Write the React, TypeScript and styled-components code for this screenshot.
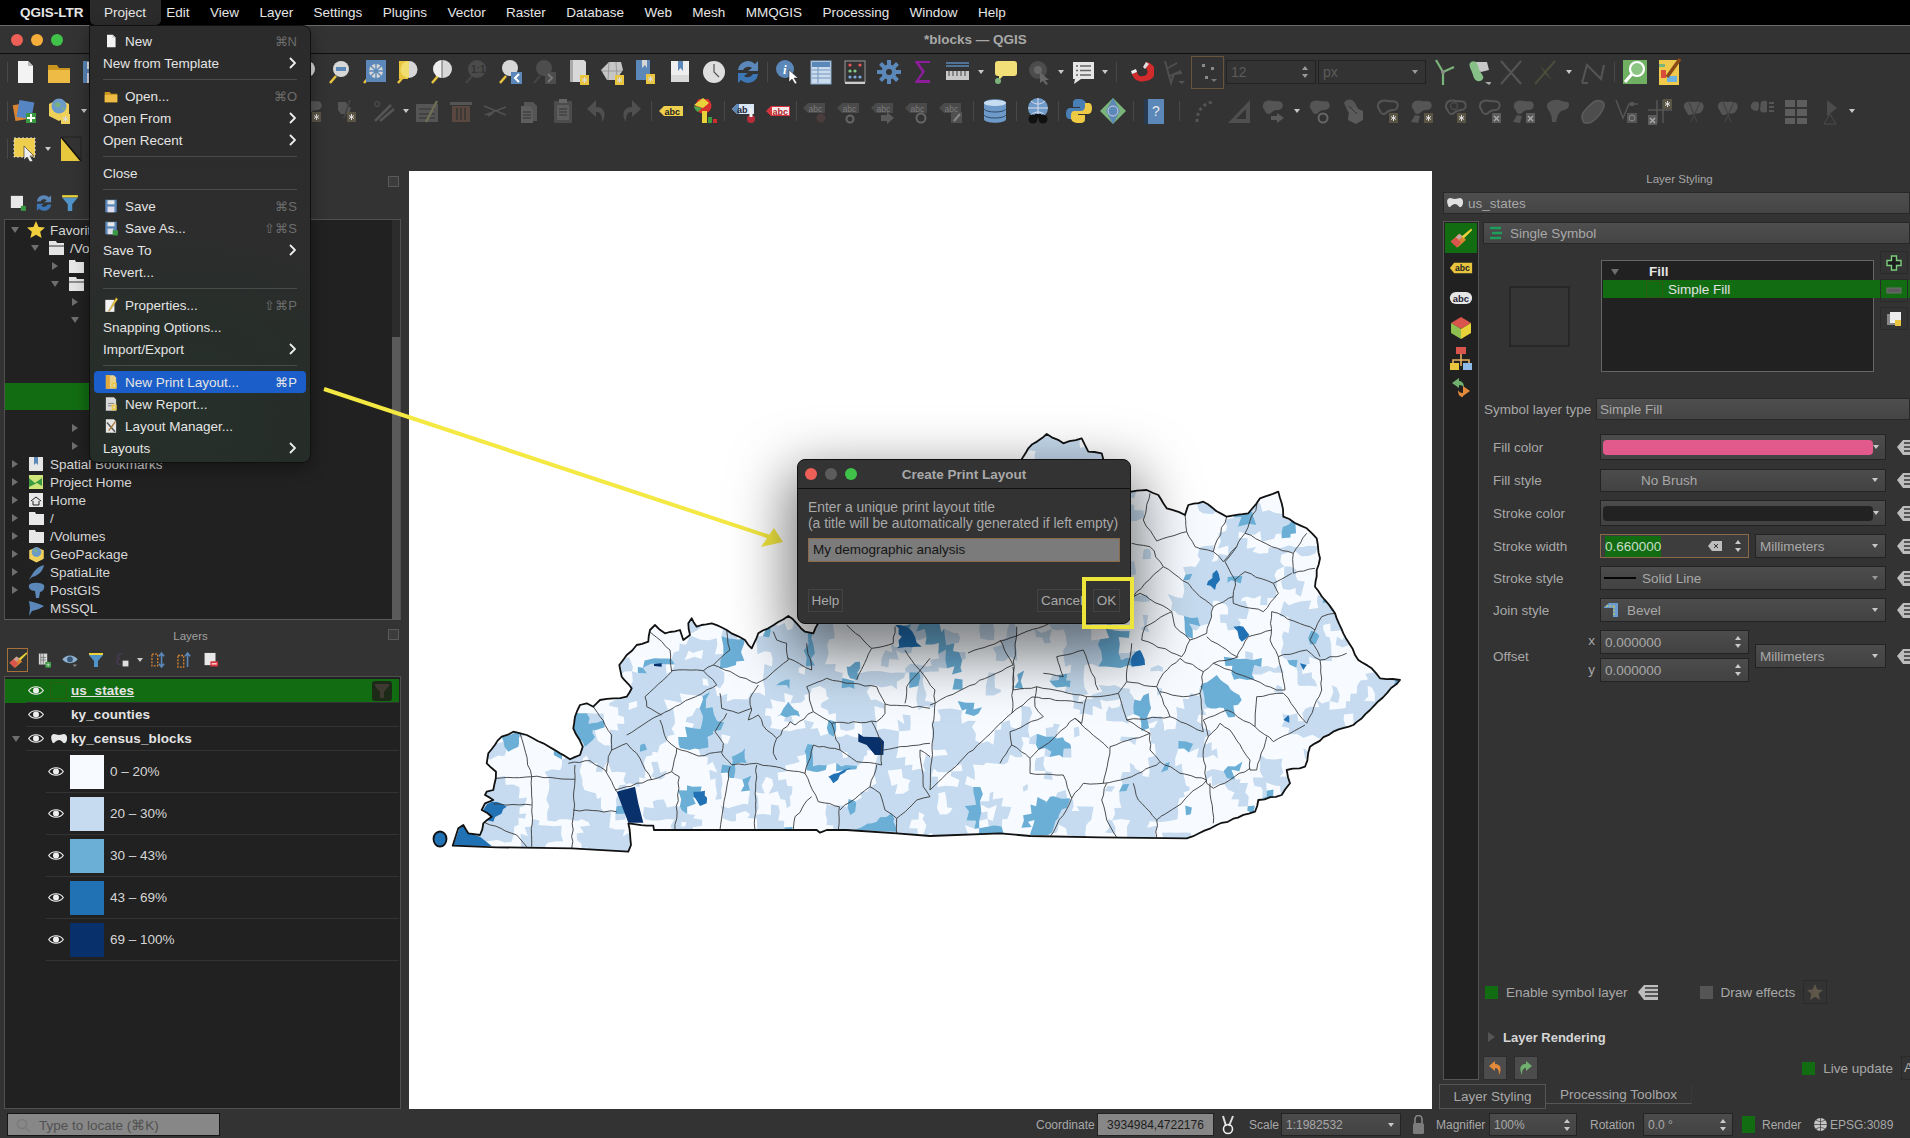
import React from "react";
import styled, { createGlobalStyle } from "styled-components";

const GlobalStyle = createGlobalStyle`
  html, body {
    margin: 0;
    background: #000;
    overflow: hidden;
    font-family: "Liberation Sans", Arial, sans-serif;
  }
  #root { width: 1910px; height: 1138px; }
`;

const Page = styled.div`
  position: relative;
  width: 1910px;
  height: 1138px;
  overflow: hidden;
  background: #333;
  display: flex;
  flex-direction: column;
`;

/* ---------- macOS menu bar ---------- */

const MenuBar = styled.div`
  height: 25px;
  flex: none;
  background: #000;
  border-bottom: 1px solid #6a6a6a;
  display: flex;
  align-items: center;
  gap: 20.4px;
  padding-left: 20px;
  color: #e6e6e6;
  font-size: 13.5px;
`;

const MenuTitle = styled.span<{ $bold?: boolean; $active?: boolean }>`
  position: relative;
  font-weight: ${(p) => (p.$bold ? 700 : 400)};
  &::before {
    content: "";
    display: ${(p) => (p.$active ? "block" : "none")};
    position: absolute;
    left: -14px;
    right: -15px;
    top: -6px;
    bottom: -5px;
    background: #2b2b2b;
    border-radius: 0 0 5px 5px;
    z-index: 0;
  }
  & > b {
    position: relative;
    font-weight: inherit;
  }
`;

const TitleBar = styled.div`
  height: 27px;
  flex: none;
  background: #333;
  border-bottom: 1px solid #0e0e0e;
  display: grid;
  grid-template-columns: 913px auto 1fr;
  align-items: center;
  padding-left: 11px;
`;

const Lights = styled.div`
  display: flex;
  gap: 8px;
`;

const Light = styled.span<{ $c: string }>`
  width: 12px;
  height: 12px;
  border-radius: 50%;
  background: ${(p) => p.$c};
`;

const WindowTitle = styled.div`
  color: #a8a8a8;
  font-size: 13.5px;
  font-weight: 700;
`;

/* ---------- toolbars ---------- */

const ToolRow = styled.div<{ $h: number; $pb?: number }>`
  height: ${(p) => p.$h}px;
  flex: none;
  box-sizing: border-box;
  display: flex;
  align-items: center;
  padding: 0 0 ${(p) => p.$pb || 0}px 6px;
  background: #333;
`;

const Slot = styled.div`
  width: 34px;
  height: 28px;
  flex: none;
  display: flex;
  align-items: center;
  justify-content: center;
`;

const Spacer = styled.div<{ $w: number }>`
  width: ${(p) => p.$w}px;
  flex: none;
  display: flex;
  justify-content: center;
  align-items: center;
`;

const SepLine = styled.span`
  width: 1px;
  height: 20px;
  background: #484848;
`;

const TinyDrop = styled.span<{ $c?: string }>`
  width: 0;
  height: 0;
  border-left: 3px solid transparent;
  border-right: 3px solid transparent;
  border-top: 4px solid ${(p) => p.$c || "#c8c8c8"};
`;

const TinyUp = styled(TinyDrop)`
  border-top: 0;
  border-bottom: 4px solid ${(p) => p.$c || "#c8c8c8"};
`;

const SnapBox = styled.div`
  width: 33px;
  height: 33px;
  flex: none;
  box-sizing: border-box;
  border: 1px solid #66553a;
  display: flex;
  align-items: center;
  justify-content: center;
`;

const DimInput = styled.div<{ $w: number }>`
  width: ${(p) => p.$w}px;
  height: 24px;
  flex: none;
  margin-left: 2px;
  box-sizing: border-box;
  border: 1px solid #222;
  color: #5c5c5c;
  font-size: 14px;
  display: flex;
  align-items: center;
  justify-content: space-between;
  padding: 0 7px 0 4px;
`;

const SpinPair = styled.span`
  display: flex;
  flex-direction: column;
  gap: 4px;
  align-items: center;
`;

/* ---------- workspace ---------- */

const Workspace = styled.div`
  height: 938px;
  flex: none;
  display: flex;
`;

const LeftDock = styled.div`
  width: 409px;
  flex: none;
  box-sizing: border-box;
  padding: 0 8px 0 4px;
  display: flex;
  flex-direction: column;
`;

const DockHeader = styled.div<{ $h: number }>`
  height: ${(p) => p.$h}px;
  flex: none;
  box-sizing: border-box;
  display: flex;
  align-items: center;
  position: relative;
  justify-content: center;
  padding: 4px 24px 0 0;
  color: #a0a0a0;
  font-size: 11.5px;
`;

const DockFloat = styled.span`
  position: absolute;
  right: 2px;
  top: 50%;
  margin-top: -5px;
  width: 9px;
  height: 9px;
  border: 1px solid #5a5a5a;
  background: #3c3c3c;
`;

const DockTools = styled.div<{ $h: number }>`
  height: ${(p) => p.$h}px;
  flex: none;
  box-sizing: border-box;
  display: flex;
  align-items: center;
  gap: 5px;
  padding: 0 0 4px 3px;
`;

const ToolBtn = styled.div<{ $on?: boolean }>`
  width: 21px;
  height: 24px;
  flex: none;
  box-sizing: border-box;
  display: flex;
  align-items: center;
  justify-content: center;
  border: 1px solid ${(p) => (p.$on ? "#a5703a" : "transparent")};
  & > svg { flex: none; }
`;

const BrowserWell = styled.div`
  height: 401px;
  flex: none;
  display: flex;
  background: #212121;
  border: 1px solid #505050;
  border-bottom-color: #5c5c5c;
  box-sizing: border-box;
`;

const TreeList = styled.div`
  flex: 1;
  min-width: 0;
  padding-top: 1px;
  display: flex;
  flex-direction: column;
`;

const ScrollTrack = styled.div`
  width: 8px;
  flex: none;
  display: flex;
  flex-direction: column;
  justify-content: flex-end;
  background: #2c2c2c;
`;

const ScrollThumb = styled.div`
  height: 282px;
  background: #5a5a5a;
`;

const TreeRow = styled.div<{ $indent: number }>`
  height: 18px;
  flex: none;
  display: flex;
  align-items: center;
  padding-left: ${(p) => p.$indent * 20}px;
  color: #d6d6d6;
  font-size: 13.5px;
  white-space: nowrap;
`;

const TreeGap = styled.div<{ $h: number; $green?: boolean }>`
  height: ${(p) => p.$h}px;
  flex: none;
  width: ${(p) => (p.$green ? "90px" : "auto")};
  background: ${(p) => (p.$green ? "#126d12" : "transparent")};
`;

const ArrowSlot = styled.span`
  width: 20px;
  flex: none;
  display: flex;
  justify-content: center;
`;

const TreeArrow = styled.span<{ $open?: boolean }>`
  width: 0;
  height: 0;
  ${(p) =>
    p.$open
      ? "border-left: 4px solid transparent; border-right: 4px solid transparent; border-top: 6px solid #6e6e6e;"
      : "border-top: 4px solid transparent; border-bottom: 4px solid transparent; border-left: 6px solid #6e6e6e;"}
`;

const TreeIcon = styled.span`
  width: 22px;
  flex: none;
  display: flex;
  justify-content: center;
  margin-right: 3px;
`;

const LayerWell = styled.div`
  flex: 1;
  min-height: 0;
  box-sizing: border-box;
  background: #212121;
  border: 1px solid #505050;
  padding-top: 2px;
`;

const LayerRow = styled.div<{ $active?: boolean }>`
  height: 24px;
  display: flex;
  align-items: center;
  background: ${(p) => (p.$active ? "#126d12" : "transparent")};
  padding-left: 1px;
  margin-right: 1px;
`;

const LayerBody = styled.div`
  flex: 1;
  align-self: stretch;
  display: flex;
  align-items: center;
  border-bottom: 1px solid #333;
  min-width: 0;
`;

const EyeSlot = styled.span`
  width: 20px;
  flex: none;
  display: flex;
  justify-content: center;
`;

const SymbolSlot = styled.span`
  width: 25px;
  flex: none;
  display: flex;
  justify-content: center;
`;

const LayerName = styled.span<{ $under?: boolean }>`
  color: #e4e4e4;
  font-weight: 700;
  font-size: 13.5px;
  letter-spacing: 0.1px;
  text-decoration: ${(p) => (p.$under ? "underline" : "none")};
`;

const SymbolDim = styled.span`
  width: 15px;
  height: 15px;
  border: 1px solid #2c5b12;
`;

const FilterChip = styled.span`
  margin-left: auto;
  margin-right: 7px;
  width: 20px;
  height: 20px;
  background: #1d2a18;
  border-radius: 3px;
  display: flex;
  align-items: center;
  justify-content: center;
`;

const LegendRow = styled.div`
  height: 42px;
  display: flex;
  padding-left: 41px;
  margin-right: 1px;
`;

const LegendBody = styled.div`
  flex: 1;
  display: flex;
  align-items: center;
  border-bottom: 1px solid #333;
  color: #d6d6d6;
  font-size: 13.5px;
`;

const Swatch = styled.span<{ $c: string }>`
  width: 34px;
  height: 34px;
  flex: none;
  background: ${(p) => p.$c};
  margin: 0 6px 0 4px;
`;

/* ---------- canvas ---------- */

const Canvas = styled.div`
  width: 1023px;
  flex: none;
  background: #fff;
  position: relative;
`;

const MapSvg = styled.svg`
  position: absolute;
  left: 0;
  top: 0;
`;

/* ---------- right dock ---------- */

const RightDock = styled.div`
  flex: 1;
  min-width: 0;
  box-sizing: border-box;
  padding-left: 11px;
  display: flex;
  flex-direction: column;
  overflow: hidden;
`;

const RightTitle = styled.div`
  height: 21px;
  flex: none;
  color: #a6a6a6;
  font-size: 11.5px;
  display: flex;
  align-items: center;
  justify-content: center;
  padding-left: 6px;
  padding-bottom: 5px;
  box-sizing: border-box;
`;

const Strip = styled.div<{ $h?: number }>`
  height: ${(p) => p.$h || 22}px;
  flex: none;
  box-sizing: border-box;
  border: 1px solid #282828;
  background: linear-gradient(#4e4e4e, #444);
  color: #a8a8a8;
  font-size: 13.5px;
  display: flex;
  align-items: center;
  gap: 5px;
  padding-left: 3px;
`;

const RightBody = styled.div`
  height: 859px;
  flex: none;
  margin-top: 7px;
  display: flex;
  gap: 4px;
`;

const TabColumn = styled.div`
  width: 36px;
  flex: none;
  box-sizing: border-box;
  background: #212121;
  border: 1px solid #555;
  padding: 1px;
  display: flex;
  flex-direction: column;
  align-items: stretch;
`;

const SideTab = styled.div<{ $on?: boolean }>`
  height: 30px;
  flex: none;
  display: flex;
  align-items: center;
  justify-content: center;
  background: ${(p) => (p.$on ? "#126d12" : "transparent")};
`;

const SymbolPage = styled.div`
  flex: 1;
  min-width: 0;
  padding-top: 1px;
  display: flex;
  flex-direction: column;
`;

const SymbolTop = styled.div`
  height: 154px;
  flex: none;
  display: flex;
  padding-top: 7px;
  box-sizing: border-box;
`;

const PreviewCell = styled.div`
  width: 118px;
  flex: none;
  padding-left: 26px;
  box-sizing: border-box;
  padding-top: 35px;
`;

const PreviewBox = styled.div`
  width: 61px;
  height: 61px;
  box-sizing: border-box;
  border: 2px solid #272727;
  background: #353535;
`;

const SymbolList = styled.div`
  width: 273px;
  height: 112px;
  flex: none;
  margin-top: 9px;
  box-sizing: border-box;
  background: #212121;
  border: 1px solid #666;
  padding: 1px;
`;

const ListRow = styled.div<{ $on?: boolean }>`
  width: 267px;
  height: 18px;
  display: flex;
  align-items: center;
  background: ${(p) => (p.$on ? "#126d12" : "transparent")};
  color: ${(p) => (p.$on ? "#e2e2e2" : "#e4e4e4")};
  font-size: 13.5px;
  font-weight: ${(p) => (p.$on ? 400 : 700)};
`;

const ListHead = styled(ListRow)`
  height: 17px;
  margin-top: 1px;
  padding-left: 8px;
  & > b { margin-left: 30px; }
`;

const ListItem = styled(ListRow)`
  padding-left: 43px;
  & > i {
    width: 15px;
    height: 15px;
    border: 1px solid #2c5b12;
    margin-right: 5px;
    flex: none;
  }
`;

const SideButtons = styled.div`
  margin-left: 6px;
  display: flex;
  flex-direction: column;
  gap: 5px;
`;

const SquareBtn = styled.div<{ $w?: number }>`
  width: ${(p) => p.$w || 28}px;
  height: 23px;
  box-sizing: border-box;
  border: 1px solid #2a2a2a;
  display: flex;
  align-items: center;
  justify-content: center;
  flex: none;
`;

const TypeRow = styled.div`
  height: 22px;
  flex: none;
  display: flex;
  align-items: center;
  color: #a8a8a8;
  font-size: 13.5px;
  & > span {
    width: 112px;
    flex: none;
    padding-left: 1px;
    white-space: nowrap;
  }
  & > div {
    flex: 1;
    min-width: 0;
  }
`;

const FieldStack = styled.div`
  margin-top: 14px;
  display: flex;
  flex-direction: column;
  gap: 8px;
`;

const FieldRow = styled.div<{ $h: number }>`
  height: ${(p) => p.$h}px;
  flex: none;
  display: flex;
  align-items: center;
  color: #a8a8a8;
  font-size: 13.5px;
`;

const FieldLabel = styled.div`
  width: 117px;
  flex: none;
  box-sizing: border-box;
  padding-left: 10px;
  display: flex;
  justify-content: space-between;
  align-items: center;
  align-self: stretch;
`;

const AxisLabels = styled.div`
  display: flex;
  flex-direction: column;
  justify-content: space-between;
  padding: 3px 5px 5px 0;
  align-self: stretch;
  box-sizing: border-box;
`;

const Combo = styled.div<{ $w?: number; $h?: number; $pad?: number }>`
  width: ${(p) => p.$w || 286}px;
  height: ${(p) => p.$h || 24}px;
  flex: none;
  box-sizing: border-box;
  border: 1px solid #232323;
  background: linear-gradient(#4c4c4c, #424242);
  display: flex;
  align-items: center;
  padding: 0 7px 0 ${(p) => (p.$pad === undefined ? 4 : p.$pad)}px;
  color: #a8a8a8;
  font-size: 13.5px;
  white-space: nowrap;
  & > :last-child { margin-left: auto; }
`;

const ColorFill = styled.span<{ $c: string }>`
  flex: none;
  width: 270px;
  height: 15px;
  margin-left: -2px;
  border-radius: 4px;
  background: ${(p) => p.$c};
`;

const LineSample = styled.span`
  width: 32px;
  height: 2px;
  background: #050505;
  margin-right: 6px;
  margin-left: -1px;
  flex: none;
`;

const NumberInput = styled(Combo)<{ $focus?: boolean }>`
  width: 149px;
  border-color: ${(p) => (p.$focus ? "#8a6a48" : "#232323")};
  background: ${(p) => (p.$focus ? "#3d3d3d" : "linear-gradient(#4c4c4c, #424242)")};
`;

const Selected = styled.span`
  background: #126d12;
  color: #c9dcc9;
  padding: 3px 0;
`;

const ClearMark = styled.svg`
  margin-left: 47px;
  flex: none;
`;

const OffsetStack = styled.div`
  display: flex;
  flex-direction: column;
  justify-content: space-between;
  align-self: stretch;
  width: 149px;
  flex: none;
`;

const Unit = styled.div`
  margin-left: 6px;
  flex: none;
`;

const DefinedSlot = styled.span`
  margin-left: 11px;
  flex: none;
  width: 20px;
  display: flex;
  align-items: center;
`;

const JoinMark = styled.svg`
  margin: 0 8px 0 -1px;
  flex: none;
`;

const EnableRow = styled.div`
  height: 24px;
  flex: none;
  margin-top: 298px;
  display: flex;
  align-items: center;
  color: #a8a8a8;
  font-size: 13.5px;
  padding-left: 2px;
`;

const Check = styled.span<{ $on?: boolean }>`
  width: 13px;
  height: 13px;
  flex: none;
  background: ${(p) => (p.$on ? "#126d12" : "#555")};
  margin-right: 8px;
`;

const InlineDefined = styled.span`
  margin: 0 42px 0 10px;
  display: flex;
`;

const RenderingRow = styled.div`
  height: 20px;
  flex: none;
  margin-top: 23px;
  display: flex;
  align-items: center;
  gap: 8px;
  padding-left: 5px;
  color: #d6d6d6;
  font-size: 13px;
  font-weight: 700;
`;

const HollowArrow = styled.span`
  width: 0;
  height: 0;
  border-top: 5px solid transparent;
  border-bottom: 5px solid transparent;
  border-left: 7px solid #555;
`;

const ActionRow = styled.div`
  height: 24px;
  flex: none;
  margin-top: 9px;
  display: flex;
  align-items: center;
  gap: 7px;
  color: #a8a8a8;
  font-size: 13.5px;
`;

const ActionBtn = styled(SquareBtn)`
  width: 24px;
  height: 24px;
  background: #4c4c4c;
  border-color: #2e2e2e;
`;

const StarBtn = styled(SquareBtn)`
  width: 24px;
  height: 24px;
  margin-left: 8px;
`;

const LiveGroup = styled.div`
  margin-left: auto;
  display: flex;
  align-items: center;
  white-space: nowrap;
  margin-right: -2px;
`;

const ApplyBtn = styled.span`
  margin-left: 8px;
  box-sizing: border-box;
  width: 11px;
  height: 24px;
  overflow: hidden;
  border: 1px solid #2a2a2a;
  border-right: 0;
  padding: 3px 2px;
`;

const TabBar = styled.div`
  margin-top: 4px;
  margin-left: -4px;
  height: 25px;
  flex: none;
  display: flex;
  align-items: flex-start;
  color: #a8a8a8;
  font-size: 13.5px;
`;

const DockTab = styled.div<{ $on?: boolean; $w: number }>`
  width: ${(p) => p.$w}px;
  height: ${(p) => (p.$on ? 25 : 20)}px;
  box-sizing: border-box;
  border: 1px solid #555;
  border-top-color: ${(p) => (p.$on ? "#555" : "transparent")};
  border-right-color: ${(p) => (p.$on ? "#555" : "#3a3a3a")};
  ${(p) => (p.$on ? "" : "border-left: 0;")}
  display: flex;
  align-items: center;
  justify-content: center;
`;

/* ---------- status bar ---------- */

const StatusBar = styled.div`
  height: 29px;
  flex: none;
  display: flex;
  align-items: center;
  padding-left: 7px;
  padding-top: 2px;
  box-sizing: border-box;
  color: #a8a8a8;
  font-size: 12px;
  white-space: nowrap;
`;

const Locator = styled.div`
  width: 213px;
  height: 23px;
  flex: none;
  box-sizing: border-box;
  border: 1px solid #151515;
  background: #878787;
  color: #515151;
  font-size: 13.5px;
  display: flex;
  align-items: center;
  gap: 9px;
  padding-left: 8px;
`;

const StatusLabel = styled.span<{ $w: number; $ml?: number }>`
  width: ${(p) => p.$w}px;
  margin-left: ${(p) => p.$ml || 0}px;
  flex: none;
`;

const CoordBox = styled.div`
  width: 117px;
  height: 23px;
  flex: none;
  box-sizing: border-box;
  border: 1px solid #222;
  background: #878787;
  color: #1e1e1e;
  display: flex;
  align-items: center;
  justify-content: center;
`;

const StatusCombo = styled.div<{ $w: number }>`
  width: ${(p) => p.$w}px;
  height: 23px;
  flex: none;
  box-sizing: border-box;
  border: 1px solid #232323;
  background: linear-gradient(#4c4c4c, #424242);
  display: flex;
  align-items: center;
  justify-content: space-between;
  padding: 0 6px 0 4px;
`;

const StatusIcon = styled.span<{ $w: number; $ml?: number }>`
  width: ${(p) => p.$w}px;
  margin-left: ${(p) => p.$ml || 0}px;
  flex: none;
  display: flex;
  justify-content: center;
`;

const StatusPush = styled.span<{ $w: number }>`
  width: ${(p) => p.$w}px;
  flex: none;
`;

const RenderCheck = styled.span`
  width: 13px;
  height: 17px;
  flex: none;
  background: #126d12;
  margin: 0 7px 0 9px;
`;

/* ---------- project menu ---------- */

const ProjectMenu = styled.div`
  position: absolute;
  left: 89px;
  top: 25px;
  width: 222px;
  height: 438px;
  box-sizing: border-box;
  padding-top: 4px;
  border: 1px solid #101010;
  border-radius: 0 8px 8px 8px;
  background:
    radial-gradient(circle at 45% 88%, #26302a 0%, rgba(38, 48, 42, 0) 45%),
    linear-gradient(#2b2b2b, #2d2d2d 45%, #252b27);
  box-shadow: 0 6px 16px rgba(0, 0, 0, 0.35);
  color: #e4e4e4;
  font-size: 13.5px;
`;

const MenuRow = styled.div<{ $on?: boolean }>`
  height: 22px;
  box-sizing: border-box;
  margin: 0 4px;
  padding: 0 9px 0 9px;
  display: flex;
  align-items: center;
  border-radius: 4px;
  background: ${(p) => (p.$on ? "#1b5ec9" : "transparent")};
  white-space: nowrap;
`;

const MenuIcon = styled.span`
  width: 22px;
  flex: none;
  display: flex;
  align-items: center;
`;

const Shortcut = styled.span<{ $on?: boolean }>`
  margin-left: auto;
  color: ${(p) => (p.$on ? "#e8e8e8" : "#6d6d6d")};
  font-size: 13px;
`;

const Chevron = styled.svg`
  margin-left: auto;
  margin-right: 1px;
`;

const MenuSep = styled.div`
  height: 1px;
  background: #4a4a4a;
  margin: 5px 13px;
`;

/* ---------- dialog and call-outs ---------- */

const Dialog = styled.div`
  position: absolute;
  left: 797px;
  top: 459px;
  width: 334px;
  height: 165px;
  box-sizing: border-box;
  background: #333;
  border: 1px solid #111;
  border-radius: 8px;
  box-shadow: 0 22px 55px 10px rgba(0, 0, 0, 0.5);
  display: flex;
  flex-direction: column;
`;

const DialogBar = styled.div`
  height: 28px;
  flex: none;
  border-bottom: 1px solid #111;
  display: grid;
  grid-template-columns: 1fr auto 1fr;
  align-items: center;
`;

const DialogLights = styled(Lights)`
  margin-left: 7px;
`;

const DialogTitle = styled.div`
  color: #a8a8a8;
  font-size: 13.5px;
  font-weight: 700;
`;

const DialogBody = styled.div`
  padding: 10px 10px 0;
  color: #a8a8a8;
  font-size: 13.85px;
  line-height: 16px;
  white-space: nowrap;
`;

const TitleInput = styled.div`
  height: 24px;
  margin-top: 7px;
  box-sizing: border-box;
  background: #7b7b7b;
  border: 1px solid #8a6a48;
  color: #161616;
  font-size: 13.5px;
  padding-left: 4px;
  display: flex;
  align-items: center;
`;

const DialogFooter = styled.div`
  margin-top: auto;
  padding: 0 10px 11px;
  display: flex;
`;

const DialogBtn = styled.div<{ $w: number; $push?: boolean }>`
  width: ${(p) => p.$w}px;
  height: 23px;
  flex: none;
  box-sizing: border-box;
  border: 1px solid #434343;
  color: #a8a8a8;
  font-size: 13.5px;
  display: flex;
  align-items: center;
  justify-content: center;
  margin-left: ${(p) => (p.$push ? "auto" : "0")};
  white-space: nowrap;
`;

const CancelBtn = styled(DialogBtn)`
  margin-right: 8px;
  justify-content: flex-start;
  padding-left: 3px;
`;

const HighlightBox = styled.div`
  position: absolute;
  left: 284px;
  top: 117px;
  width: 52px;
  height: 52px;
  box-sizing: border-box;
  border: 4px solid #ede53a;
`;

const ArrowOverlay = styled.svg`
  position: absolute;
  left: 0;
  top: 0;
  pointer-events: none;
`;

/* ---------- icons ---------- */

const D = "#555";
const BLUE = "#5b88b9";
const YEL = "#e9c53f";

const blob = (fill = D) => (
  <path d="M4 8c1-5 7-5 10-4s7-1 9 2 0 7-4 7-5 1-7 3-5 1-6-2-3-3-2-6z" fill={fill} />
);
const ring = (fill = D) => (
  <path d="M4 8c1-5 7-5 10-4s7-1 9 2 0 7-4 7-5 1-7 3-5 1-6-2-3-3-2-6z" fill="none" stroke={fill} strokeWidth="2" />
);
const star = (x: number, y: number, bg = "#5a5445") => (
  <>
    <rect x={x} y={y} width="9" height="10" fill={bg} />
    <path d={`M${x + 4.5} ${y + 2}v6M${x + 2} ${y + 3.5}l5 3M${x + 7} ${y + 3.5}l-5 3`} stroke="#ddd" strokeWidth="1" />
  </>
);
const cross = (x: number, y: number) => (
  <>
    <rect x={x} y={y} width="9" height="10" fill="#5c5c5c" />
    <path d={`M${x + 2} ${y + 3}l5 5M${x + 7} ${y + 3}l-5 5`} stroke="#aaa" strokeWidth="1.4" />
  </>
);
const mag = (glass: React.ReactNode, handle = YEL) => (
  <>
    <path d="M4 25l6-7" stroke={handle} strokeWidth="2.5" />
    {glass}
  </>
);
const tag = (c: string, text: string, ink = "#222") => (
  <>
    <path d="M2 14l5-5h19v10H7z" fill={c} />
    <text x="7.5" y="17.5" fontSize="9" fontFamily="Liberation Sans" fontWeight="700" fill={ink}>{text}</text>
  </>
);
const dimTag = (extra: React.ReactNode) => (
  <>
    <path d="M2 11l5-5h17v10H7z" fill="#4a4a4a" />
    <text x="7.5" y="14.5" fontSize="8.5" fontFamily="Liberation Sans" fill="#7c7c7c">abc</text>
    {extra}
  </>
);

const icons: Record<string, React.ReactNode> = {
  new: <><path d="M7 3h10l5 5v17H7z" fill="#f3f3f3" /><path d="M17 3v5h5z" fill="#bbb" /></>,
  open: <><path d="M3 7h9l2 3h11v15H3z" fill="#c9951f" /><path d="M3 12h22v13H3z" fill="#eebc45" /></>,
  save: <><rect x="4" y="3" width="20" height="22" fill={BLUE} /><rect x="8" y="4" width="12" height="7" fill="#e8e8e8" /><rect x="8" y="15" width="12" height="10" fill="#dde" /></>,
  zoomIn: mag(<circle cx="15" cy="11" r="8" fill="#d7d7d7" />),
  zoomOut: mag(<><circle cx="15" cy="11" r="8" fill="#d7d7d7" /><rect x="10" y="9" width="10" height="4" fill={BLUE} /></>),
  zoomFull: mag(<><rect x="6" y="2" width="20" height="22" fill={BLUE} /><circle cx="16" cy="13" r="7" fill="#d7d7d7" /><path d="M16 5v16M9 13h14M11 8l10 10M21 8L11 18" stroke={BLUE} strokeWidth="1.4" /></>),
  zoomSel: mag(<><rect x="5" y="3" width="9" height="18" fill={YEL} /><path d="M15 3a8.5 8.5 0 1 1 0 17z" fill="#d7d7d7" /><path d="M15 3a8.5 8.5 0 0 0 0 17z" fill="#f2dd70" /></>),
  zoomLayer: mag(<><circle cx="15" cy="11" r="9" fill="#d7d7d7" /><path d="M14 2a9 9 0 0 0 0 18z" fill="#eee" /><path d="M14 2v18" stroke="#666" /></>),
  zoomNative: mag(<><circle cx="15" cy="11" r="9" fill="#4b4b4b" /><text x="9" y="15" fontSize="10" fontFamily="Liberation Sans" fontWeight="700" fill="#333">1:1</text></>, "#444"),
  zoomLast: <>{mag(<circle cx="14" cy="10" r="8" fill="#d7d7d7" />)}<rect x="15" y="14" width="11" height="12" fill={BLUE} /><path d="M23 16l-4 4 4 4" stroke="#fff" strokeWidth="2" fill="none" /></>,
  zoomNext: <>{mag(<circle cx="14" cy="10" r="8" fill="#4d4d4d" />, "#444")}<rect x="15" y="14" width="11" height="12" fill="#4d4d4d" /><path d="M18 16l4 4-4 4" stroke="#777" strokeWidth="2" fill="none" /></>,
  newMap: <><path d="M6 2h14l2 2v20H6z" fill="#d8d8d8" /><path d="M6 2h3v22H6z" fill="#aaa" />{star(16, 17, YEL)}</>,
  new3d: <><path d="M3 12L11 4h12l2 8-7 10H9z" fill="#c6c6c6" /><path d="M11 4l-1 18M18 4l1 17M4 13h20" stroke="#999" />{star(17, 17, YEL)}</>,
  bookmarkNew: <><path d="M4 2h14v20H4z" fill={BLUE} /><path d="M10 2v8l3-3 2 3V2z" fill="#d6d6d6" />{star(14, 16, YEL)}</>,
  bookmark: <><path d="M5 3h18v21H5z" fill="#d9d9d9" /><path d="M5 3h18v14H5z" fill="#eee" /><path d="M12 3v10l2.5-3 2.5 3V3z" fill={BLUE} /></>,
  clock: <><circle cx="14" cy="14" r="11" fill="#dedede" /><path d="M14 6v8l5 5" stroke="#555" strokeWidth="1.2" fill="none" /></>,
  refresh: <><path d="M4 12a10 10 0 0 1 17-6l3-3v10H14l4-3a6 6 0 0 0-9 2z" fill={BLUE} /><path d="M24 16a10 10 0 0 1-17 6l-3 3V15h10l-4 3a6 6 0 0 0 9-2z" fill="#3d76b4" /></>,
  identify: <><circle cx="12" cy="11" r="9" fill={BLUE} /><text x="10" y="16" fontSize="13" fontFamily="Liberation Serif" fontStyle="italic" fontWeight="700" fill="#fff">i</text><path d="M16 12v12l3-3 3 5 2-1-3-5h4z" fill="#fff" stroke="#222" strokeWidth=".5" /></>,
  table: <><rect x="4" y="3" width="20" height="23" fill="#cbdcee" stroke="#8aa8c8" /><rect x="5" y="4" width="18" height="5" fill={BLUE} /><path d="M5 12h18M5 16h18M5 20h18M11 9v16" stroke="#7397bd" /></>,
  abacus: <><rect x="4" y="3" width="20" height="21" fill="#333" stroke="#999" /><path d="M4 25h20" stroke="#ccc" strokeWidth="2" /><circle cx="9" cy="7" r="1.6" fill="#e55" /><circle cx="19" cy="7" r="1.6" fill="#e55" /><circle cx="9" cy="13" r="1.6" fill="#8c8" /><circle cx="14" cy="13" r="1.6" fill="#8c8" /><circle cx="9" cy="19" r="1.6" fill="#7ad" /><circle cx="14" cy="19" r="1.6" fill="#7ad" /><circle cx="19" cy="19" r="1.6" fill="#7ad" /></>,
  gear: <><path d="M14 2v24M2 14h24M5.500 5.500l17 17M22.500 5.500l-17 17" stroke={BLUE} strokeWidth="4" /><circle cx="14" cy="14" r="7.500" fill={BLUE} /><circle cx="14" cy="14" r="3" fill="#333" /></>,
  sigma: <path d="M21 5V3H6v1l7 10-7 10v1h15v-3H10l6-8.500L10 5z" fill="#8e1d9c" />,
  ruler: <><path d="M3 5h23M3 8h23" stroke={BLUE} strokeWidth="1.4" /><rect x="3" y="13" width="23" height="9" fill="#c9c9c9" /><path d="M6 13v5M10 13v5M14 13v5M18 13v5M22 13v5" stroke="#444" /></>,
  tooltip: <><path d="M7 3h16a3 3 0 0 1 3 3v9a3 3 0 0 1-3 3H12l-4 4v-4H7a3 3 0 0 1-3-3V6a3 3 0 0 1 3-3z" fill="#f3df77" /><circle cx="7" cy="23" r="3" fill="#7bb47b" /></>,
  gearPlay: <><circle cx="13" cy="12" r="9" fill="#4c4c4c" /><circle cx="13" cy="12" r="4" fill="#666" /><path d="M15 14v11l3-2 3 4 2-1-3-4h4z" fill="#666" /></>,
  comment: <><rect x="4" y="4" width="21" height="17" fill="#e6e6e6" /><path d="M6 21h6l-7 5z" fill="#e6e6e6" /><path d="M7 8h2M11 8h11M7 12.500h2M11 12.500h11M7 17h2M11 17h11" stroke="#666" strokeWidth="1.500" /></>,
  magnet: <><path d="M20 4a9 9 0 0 1-1 19 10 10 0 0 1-13-7l5-2c1 4 3 5 6 4a4 4 0 0 0 0-9z" fill="#d22b2b" /><path d="M6 16l5-2-1-3-5 2z" fill="#eee" /><path d="M20 4l-3 5 2 2 4-5z" fill="#ddd" /></>,
  digit: <><path d="M5 3l6 22 3-9 8-1M8 10l9-5M10 18l11-5" stroke="#4f4f4f" strokeWidth="2" fill="none" /><path d="M18 23h7l-3 3z" fill="#555" /></>,
  yShape: <><path d="M14 14v13M14 14L7 2M14 14l11-5" stroke="#7bb47b" strokeWidth="2.2" /><circle cx="14" cy="14" r="2" fill="#8a8a8a" /></>,
  greenShape: <><path d="M12 4h12l2 8-8 2-6-3z" fill="#c8c8c8" /><path d="M8 4c5-3 7 3 8 7s7 8 3 11-8 0-9-5-6-10-2-13z" fill="#87c087" /><path d="M22 24h7l-3 3z" fill="#aaa" /></>,
  xDim: <path d="M4 3l20 23M24 3L4 26" stroke="#555" strokeWidth="2" />,
  xDark: <><path d="M4 26L24 3" stroke="#4d4d3c" strokeWidth="2" /><path d="M9 7l6 7 6 8-7-6z" fill="#4d4d3c" /></>,
  nDim: <path d="M3 25l5-18 14 14 3-14M3 25h6" stroke="#555" strokeWidth="2" fill="none" />,
  greenSearch: <><rect x="2" y="2" width="24" height="24" fill="#6fb063" /><circle cx="16" cy="11" r="7" fill="#8cc484" stroke="#fff" strokeWidth="2.2" /><path d="M11 16l-7 8" stroke="#fff" strokeWidth="3" /></>,
  mapPencil: <><rect x="4" y="2" width="20" height="25" fill="#efc94c" /><path d="M6 12h5v8H6z" fill="#d94c3c" /><path d="M12 18h10v6H12z" fill="#6db5de" /><path d="M4 6h6v3H4z" fill="#7bb47b" /><path d="M25 1L12 19" stroke="#8a4a15" strokeWidth="3.500" /></>,
  addLayers: <><rect x="3" y="7" width="14" height="16" fill="#d98432" transform="rotate(-10 10 15)" /><rect x="7" y="4" width="15" height="17" fill="#5585c3" transform="rotate(10 14 12)" /><rect x="15" y="16" width="10" height="10" fill="#3a9a42" /><path d="M20 17v8M16 21h8" stroke="#fff" strokeWidth="2" /></>,
  dataSource: <><path d="M14 2l10 5v12l-10 5-10-5V7z" fill="#eed05a" /><circle cx="14" cy="9" r="7.500" fill="#6c9ac9" /><path d="M9 7l4-2 3 3-3 3zM16 12l3-2 1 3z" fill="#7bb47b" />{star(16, 17, "#eed05a")}</>,
  dim1: <>{blob()}{star(14, 15)}</>,
  dim2: <><path d="M6 5h8l2 4 3 2-2 6H9l-3-4z" fill={D} /><path d="M18 3l-6 18" stroke="#444" strokeWidth="2" />{star(15, 15)}</>,
  pencilDim: <><circle cx="7" cy="7" r="2.500" fill="none" stroke={D} /><path d="M5 24L21 8M10 24L24 12" stroke={D} strokeWidth="2.500" /></>,
  formDim: <><rect x="3" y="7" width="22" height="18" fill={D} /><path d="M6 12h16M6 17h16M6 21h16" stroke="#333" /><path d="M13 25L24 4" stroke="#6e6e56" strokeWidth="2.500" /></>,
  trash: <><rect x="5" y="9" width="18" height="16" fill="#5a4840" /><rect x="3" y="5" width="22" height="3" fill="#555" /><path d="M10 11v12M14 11v12M18 11v12" stroke="#333" strokeWidth="1.5" /></>,
  cut: <path d="M3 9l22 9M4 18l21-8M7 19l5-3" stroke="#515151" strokeWidth="1.800" />,
  copy: <><path d="M9 5h9l4 4v15H9z" fill="#555" /><path d="M6 9h9l3 3v14H6z" fill="#5e5e5e" /><path d="M8 15h8M8 18h8M8 21h8" stroke="#333" /></>,
  paste: <><rect x="5" y="4" width="18" height="22" rx="1" fill="#4c4c4c" /><rect x="8" y="8" width="12" height="15" fill="#5e5e5e" /><path d="M10 12h8M10 15h8M10 18h8" stroke="#333" /><rect x="10" y="2" width="8" height="4" fill="#666" /></>,
  undo: <path d="M13 3L4 12l9 8v-5c5 0 6 3 6 10 5-7 3-15-6-15z" fill="#4f4f4f" />,
  redo: <path d="M15 3l9 9-9 8v-5c-5 0-6 3-6 10-5-7-3-15 6-15z" fill="#4f4f4f" />,
  abcYellow: tag("#efd04e", "abc"),
  chart: <><path d="M8 2a8 8 0 1 0 9 0z" fill="#d8302f" /><path d="M3 8l9 3 6-5-6-5z" fill="#e9d13a" /><path d="M3 9a8 8 0 0 0 4 6l4-4z" fill="#4aa648" /><rect x="11" y="14" width="5" height="12" fill="#e9d13a" /><rect x="17" y="20" width="4" height="6" fill="#3c9a43" /><rect x="22" y="22" width="4" height="4" fill="#cc2d2d" /></>,
  abBlue: <><path d="M2 12l5-5h17v10H7z" fill="#d9e6f5" /><path d="M2 12l5-5h2v10H7z" fill={BLUE} /><text x="7" y="15.500" fontSize="9" fontFamily="Liberation Sans" fontWeight="700" fill="#223">ab</text><circle cx="21" cy="22" r="4" fill="#b52d3a" /><rect x="19.500" y="11" width="3" height="9" fill="#eee" /></>,
  abcRed: <><path d="M2 14l5-5h19v10H7z" fill="#d6343f" /><rect x="8" y="10" width="17" height="8" fill="#f5e9e9" /><text x="8.500" y="17.500" fontSize="9" fontFamily="Liberation Sans" fontWeight="700" fill="#b2262e">abc</text></>,
  lab1: dimTag(<circle cx="20" cy="21" r="4.500" fill="#4a3d3d" />),
  lab2: dimTag(<><circle cx="15" cy="22" r="3.500" fill="none" stroke="#666" strokeWidth="2" /></>),
  lab3: dimTag(<path d="M12 18h6v-3l7 6-7 6v-3h-6z" fill="#5a5a5a" />),
  lab4: dimTag(<circle cx="18" cy="21" r="4.500" fill="none" stroke="#666" strokeWidth="2" />),
  lab5: dimTag(<><rect x="14" y="15" width="11" height="11" fill="#505050" /><path d="M17 24l6-7" stroke="#888" strokeWidth="2" /></>),
  db: <><path d="M3 6c0-5 22-5 22 0v16c0 5-22 5-22 0z" fill="#6d9ac9" /><path d="M3 6c0 4 22 4 22 0s-22-4-22 0z" fill="#c7dcf0" /><path d="M3 12c2 4 20 4 22 0M3 18c2 4 20 4 22 0" stroke="#2f4c6c" fill="none" /></>,
  globeBin: <><circle cx="14" cy="11" r="10" fill="#6d9ac9" /><path d="M4 11h20M14 1v20M7 4c4 4 10 4 14 0M7 18c4-4 10-4 14 0" stroke="#dde" fill="none" /><circle cx="9" cy="22" r="4.500" fill="#111" /><circle cx="19" cy="22" r="4.500" fill="#111" /><rect x="11" y="17" width="6" height="4" fill="#111" /></>,
  python: <><path d="M14 2c-6 0-6 2-6 5v3h7v1H5c-3 0-4 3-4 6s1 5 4 5h3v-4c0-2 2-4 4-4h6c2 0 3-2 3-4V7c0-3-3-5-7-5z" fill="#4a7fb5" /><path d="M14 26c6 0 6-2 6-5v-3h-7v-1h10c3 0 4-3 4-6s-1-5-4-5h-3v4c0 2-2 4-4 4H9c-2 0-3 2-3 4v3c0 3 3 5 8 5z" fill="#eeca45" /></>,
  diamond: <><path d="M14 1l13 13-13 13L1 14z" fill="#7bb47b" /><path d="M14 1l7 13-7 13-7-13z" fill={BLUE} /><circle cx="14" cy="14" r="5" fill="none" stroke="#ccd" /></>,
  help: <><rect x="4" y="2" width="20" height="25" fill="#27394e" /><rect x="8" y="2" width="16" height="25" fill={BLUE} /><text x="12" y="19" fontSize="14" fontFamily="Liberation Sans" fill="#e8e8e8">?</text></>,
  arcDim: <path d="M6 25C6 14 11 7 22 5" stroke={D} strokeWidth="3" strokeDasharray="3 3" fill="none" />,
  triDim: <><path d="M3 26L25 3v23z" fill="#4f4f4f" /><path d="M11 22L21 12v10z" fill="#333" /></>,
  blobArrow: <>{blob()}<path d="M12 19h6v-3l7 5-7 5v-3h-6z" fill="#5a5a5a" /></>,
  blobRound: <>{blob()}<circle cx="17" cy="21" r="4.500" fill="none" stroke="#666" strokeWidth="2" /></>,
  blobHex: <><path d="M4 6c3-5 9-4 11 0s4 6 4 9H8z" fill={D} /><path d="M14 10l9 4v9l-7 4-8-4 1-10z" fill="#5b5b5b" /><path d="M9 9l8 8" stroke="#333" /></>,
  ringStar: <>{ring()}{star(15, 16)}</>,
  blobStar2: <>{blob()}<path d="M3 25l4-7 5 1-2 7z" fill={D} />{star(16, 16)}</>,
  ringIn: <>{ring()}<circle cx="12" cy="9" r="3.500" fill="none" stroke={D} />{star(15, 16)}</>,
  ringX: <>{ring()}{cross(16, 16)}</>,
  blobX: <>{blob()}<path d="M3 25l4-7 5 1-2 7z" fill={D} />{cross(16, 16)}</>,
  fill: <path d="M4 6c4-4 10-4 14-2s7-1 7 4-7 5-9 7-3 6-4 10H8c0-5-1-8-3-11S2 8 4 6z" fill="#535353" />,
  smooth: <path d="M5 24C2 18 6 14 10 10s8-8 13-6 3 6 1 10-9 12-14 12-4 0-5-2z" fill="#4d4d4d" stroke="#5c5c5c" strokeWidth="1.500" />,
  vertex: <><path d="M4 3l7 18 6-14h9" stroke={D} strokeWidth="1.500" fill="none" /><rect x="18" y="5" width="4" height="4" fill={D} /><rect x="15" y="16" width="10" height="10" fill="#555" /><circle cx="20" cy="21" r="3" fill="none" stroke="#888" /></>,
  cutLine: <><path d="M2 13h24M11 3v23M17 3v23" stroke={D} strokeWidth="1.500" />{star(17, 2)}{cross(2, 18)}</>,
  splitA: <><path d="M4 8c2-5 7-3 9-3s8-1 10 2-1 8-3 9-5 0-7 1-5 2-6-1-4-5-3-8z" fill={D} /><path d="M9 5l8 20M20 5l-9 20" stroke="#444" strokeWidth="1.300" /></>,
  merge: <><path d="M3 8c1-4 5-4 7-3s1 10-2 9-6-2-5-6z" fill={D} /><path d="M13 5c3-2 6-1 6 0v10c-3 1-7 1-7-3z" fill={D} /><path d="M21 6h5M21 10h5M21 14h5" stroke={D} strokeWidth="1.800" /></>,
  grid6: <><rect x="3" y="3" width="10" height="7" fill="#5e5e5e" /><rect x="15" y="3" width="10" height="7" fill="#5e5e5e" /><rect x="3" y="12" width="10" height="7" fill="#5e5e5e" /><rect x="15" y="12" width="10" height="7" fill="#5e5e5e" /><rect x="3" y="21" width="10" height="6" fill="#5e5e5e" /><rect x="15" y="21" width="10" height="6" fill="#5e5e5e" /></>,
  triPlay: <><path d="M11 3l10 8-10 8z" fill="#4c4c4c" /><path d="M8 27l6-10 6 10z" fill="none" stroke="#4c4c4c" /></>,
  selection: <><rect x="3" y="3" width="21" height="19" fill="#efce4d" stroke="#ddd" strokeDasharray="2 2" /><path d="M13 11v14l3-3 3 5 3-1-3-5h4z" fill="#eee" stroke="#222" strokeWidth=".6" /></>,
  triYellow: <><path d="M4 2v24h20z" fill="#e8c93e" /><path d="M4 2l20 24" stroke="#111" strokeWidth="1.500" /><path d="M4 2h20v24" fill="none" stroke="#222" /></>,
  browserNew: <><rect x="4" y="4" width="17" height="17" fill="#e8e8e8" /><rect x="18" y="18" width="7" height="7" fill="#3a9a42" /></>,
  brush: <><path d="M2 18l10-9 8 7-10 9z" fill="#d98432" /><path d="M2 18l6-5 6 6-5 6z" fill="#d9544c" /><path d="M8 13l4-4 4 3-4 4z" fill="#c9a0a0" /><path d="M15 12L26 3l1 2-10 10z" fill="#e9d13a" /></>,
  layerIndicator: <><rect x="6" y="4" width="13" height="17" fill="#d8d8d8" /><path d="M9 3v17M13 3v17M9 10h8M9 14h8" stroke="#555" /><rect x="16" y="17" width="9" height="9" fill="#3a9a42" /><path d="M20.500 18v7M17 21.500h7" stroke="#e8e8e8" /></>,
  eyeDrop: <><path d="M2 13c6-8 18-8 24 0-6 8-18 8-24 0z" fill="#8fb0cf" /><circle cx="14" cy="13" r="4.500" fill="#3a5a7a" /><path d="M18 21h7l-3.500 4z" fill="#888" /></>,
  epsilon: <><path d="M14 4c-4 0-7 1-7 4s4 4 4 4-5 1-5 5 4 4 7 4" fill="none" stroke="#4a3a55" strokeWidth="2" /><rect x="15" y="15" width="9" height="9" fill="#ddd" /></>,
  expandAll: <><rect x="3" y="5" width="9" height="18" fill="none" stroke="#d98432" strokeDasharray="3 2" strokeWidth="2" /><path d="M18 3v22M14 8l4-5 4 5M14 20l4 5 4-5" fill="none" stroke="#5b88b9" strokeWidth="2.500" /></>,
  collapseAll: <><rect x="3" y="7" width="9" height="18" fill="none" stroke="#d98432" strokeDasharray="3 2" strokeWidth="2" /><path d="M18 25V3M14 8l4-5 4 5" fill="none" stroke="#5b88b9" strokeWidth="2.500" /></>,
  removeLayer: <><rect x="4" y="3" width="17" height="19" fill="#e8e8e8" /><rect x="13" y="16" width="12" height="8" rx="1" fill="#d9343f" /><path d="M15 20h8" stroke="#fff" strokeWidth="1.800" /></>,
  mSaveAs: <><rect x="4" y="3" width="20" height="22" fill={BLUE} /><rect x="8" y="4" width="12" height="7" fill="#e8e8e8" /><rect x="8" y="15" width="10" height="10" fill="#dde" /><rect x="17" y="18" width="9" height="9" fill="#3a9a42" /></>,
  mProps: <><path d="M4 5h16v21H4z" fill="#f3f3f3" /><path d="M23 1L11 22l-2 3 3-1L26 4z" fill="#e8c93e" stroke="#8a6a2f" strokeWidth=".6" /></>,
  mLayout: <><path d="M5 2h14l4 4v20H5z" fill="#e8d28a" /><path d="M5 2h7v24H5z" fill="#e3a93a" />{star(15, 15, YEL)}</>,
  mReport: <><path d="M5 2h14l4 4v20H5z" fill="#d8d8d8" /><path d="M9 13h10M9 17h6" stroke="#777" strokeWidth="1.500" />{star(15, 15, YEL)}</>,
  mManager: <><path d="M5 2h14l4 4v20H5z" fill="#e6e6e6" /><path d="M7 8l14 16" stroke="#555" strokeWidth="2.500" /><path d="M22 6L10 22" stroke="#ac7b3a" strokeWidth="2.500" /></>,
};

const Ico = ({ k, size = 28 }: { k: string; size?: number }) => (
  <svg width={size} height={size} viewBox="0 0 28 28">{icons[k]}</svg>
);

const Eye = () => (
  <svg width="16" height="11" viewBox="0 0 16 11">
    <path d="M.7 5.500C4 .5 12 .5 15.300 5.500 12 10.500 4 10.500.7 5.500z" fill="none" stroke="#eee" strokeWidth="1.200" />
    <circle cx="8" cy="5.500" r="3" fill="#eee" />
  </svg>
);

const Funnel = ({ c = "#4f93c8", top = "#e9d13a", size = 16 }: { c?: string; top?: string; size?: number }) => (
  <svg width={size} height={size} viewBox="0 0 16 16">
    <path d="M1 3h14l-5 6v6H6V9z" fill={c} />
    <rect x="1" y="1" width="14" height="2" fill={top} />
  </svg>
);

const DataDefined = () => (
  <svg width="20" height="20" viewBox="0 0 20 20">
    <path d="M0 10l6-7h14v15H6z" fill="#bdbdbd" />
    <path d="M7 6h13M7 10h13M7 14h13" stroke="#333" strokeWidth="1.400" />
  </svg>
);

/* ---------- toolbar contents: a string is an icon, a number a blank, "|n" a separator, ".n" a drop dot ---------- */

type Item = string | number;

const row1: Item[] = [
  "|2", "new", "open", "save", 179, "zoomIn", "zoomOut", "zoomFull", "zoomSel", "zoomLayer", "zoomNative", "zoomLast", "zoomNext",
  "newMap", "new3d", "bookmarkNew", "bookmark", "clock", "refresh", "|5", "identify", "table", "abacus", "gear", "sigma", "ruler", ".14",
  "tooltip", "gearPlay", ".10", "comment", ".10", "|13", "magnet", "digit", "@snap", "@size", "@unit", "yShape", "greenShape", "xDim",
  "xDark", ".14", "nDim", "|8", "greenSearch", "mapPencil",
];

const row2: Item[] = [
  "|2", "addLayers", "dataSource", ".16", 203, "dim1", "dim2", 4, "pencilDim", ".9", "formDim", "trash", "cut", "copy", "paste", "undo", "redo",
  "|6", "abcYellow", "chart", "|5", "abBlue", "abcRed", "|3", "lab1", "lab2", "lab3", "lab4", "lab5", "|10", "db", "|9", "globeBin", "|7",
  "python", "diamond", "|7", "help", "|17", "arcDim", "triDim", "blobArrow", ".13", "blobRound", "blobHex", "ringStar", "blobStar2", "ringIn",
  "ringX", "blobX", "fill", "smooth", "vertex", "cutLine", "splitA", "splitA", "merge", "grid6", "triPlay", ".10",
];

const row3: Item[] = ["|2", "selection", ".12", "triYellow"];

const ToolItem = ({ item }: { item: Item }) => {
  if (typeof item === "number") return <Spacer $w={item} />;
  if (item[0] === "|") return <Spacer $w={Number(item.slice(1))}><SepLine /></Spacer>;
  if (item[0] === ".") return <Spacer $w={Number(item.slice(1))}><TinyDrop /></Spacer>;
  if (item === "@snap")
    return (
      <SnapBox>
        <svg width="24" height="24" viewBox="0 0 24 24">
          <path d="M6 4h3v3H6zM15 7h3v3h-3zM9 16h3v3H9z" fill="#8a8a8a" />
          <path d="M15 19h6l-3 3z" fill="#777" />
        </svg>
      </SnapBox>
    );
  if (item === "@size")
    return (
      <DimInput $w={90}>
        12
        <SpinPair><TinyUp $c="#999" /><TinyDrop $c="#999" /></SpinPair>
      </DimInput>
    );
  if (item === "@unit")
    return (
      <DimInput $w={108}>
        px
        <TinyDrop $c="#999" />
      </DimInput>
    );
  return <Slot><Ico k={item} /></Slot>;
};

const Toolbar = ({ items, h, pb }: { items: Item[]; h: number; pb?: number }) => (
  <ToolRow $h={h} $pb={pb}>
    {items.map((item, i) => <ToolItem key={i} item={item} />)}
  </ToolRow>
);

/* ---------- browser tree ---------- */

const folder = (
  <svg width="17" height="16" viewBox="0 0 17 16"><path d="M1 2h6l1 2h8v11H1z" fill="#e8e8e8" /></svg>
);
const folderOpen = (
  <svg width="17" height="16" viewBox="0 0 17 16"><path d="M1 1h7l1 2h7v12H1z" fill="#e4e4e4" /><path d="M1 6h15" stroke="#333" /></svg>
);
const treeGlyph: Record<string, React.ReactNode> = {
  star: <svg width="18" height="18" viewBox="0 0 18 18"><path d="M9 0l2.600 6 6.400.6-4.800 4.200L14.600 17 9 13.700 3.400 17l1.400-6.200L0 6.600 6.400 6z" fill="#f2cf3c" /></svg>,
  folder,
  folderOpen,
  bookmarks: <svg width="16" height="16" viewBox="0 0 16 16"><rect x="1" y="1" width="14" height="14" fill="#e6e6e6" /><path d="M6 1h4v8L8 7 6 9z" fill="#5b88b9" /></svg>,
  projectHome: <svg width="16" height="16" viewBox="0 0 16 16"><rect x="1" y="1" width="14" height="14" fill="#cfe57a" /><path d="M1 4l6 5 7-5v8l-5-3-8 4z" fill="#3c9a43" /></svg>,
  home: <svg width="16" height="16" viewBox="0 0 16 16"><rect x="1" y="1" width="14" height="14" fill="#e8e8e8" /><path d="M3 9l5-4 5 4M5 9v4h6V9" fill="none" stroke="#222" /></svg>,
  geopackage: <svg width="17" height="17" viewBox="0 0 28 28"><path d="M14 2l12 5v14l-12 6-12-6V7z" fill="#eed05a" /><circle cx="14" cy="10" r="8" fill="#6c9ac9" /><path d="M9 8l4-3 3 3-3 3z" fill="#7bb47b" /></svg>,
  spatialite: <svg width="17" height="17" viewBox="0 0 17 17"><path d="M1 16C4 10 8 3 16 1c-1 6-6 11-12 12z" fill="#5b88b9" /></svg>,
  postgis: <svg width="17" height="17" viewBox="0 0 17 17"><path d="M1 3c2-3 12-3 15 0 1 3-1 7-4 7l-1 6H8L7 9C3 9 0 6 1 3z" fill="#5b88b9" /></svg>,
  mssql: <svg width="17" height="17" viewBox="0 0 17 17"><path d="M1 1c5 1 11 3 15 5-3 2-7 4-12 5l-3 5 1-8z" fill="#5b88b9" /></svg>,
};

type TreeEntry = { indent: number; arrow?: "open" | "closed"; icon?: string; label?: string };

const treeTop: TreeEntry[] = [
  { indent: 0, arrow: "open", icon: "star", label: "Favorites" },
  { indent: 1, arrow: "open", icon: "folderOpen", label: "/Volumes" },
  { indent: 2, arrow: "closed", icon: "folder" },
  { indent: 2, arrow: "open", icon: "folderOpen" },
  { indent: 3, arrow: "closed" },
  { indent: 3, arrow: "open" },
];

const treeBottom: TreeEntry[] = [
  { indent: 3, arrow: "closed" },
  { indent: 3, arrow: "closed" },
  { indent: 0, arrow: "closed", icon: "bookmarks", label: "Spatial Bookmarks" },
  { indent: 0, arrow: "closed", icon: "projectHome", label: "Project Home" },
  { indent: 0, arrow: "closed", icon: "home", label: "Home" },
  { indent: 0, arrow: "closed", icon: "folder", label: "/" },
  { indent: 0, arrow: "closed", icon: "folder", label: "/Volumes" },
  { indent: 0, arrow: "closed", icon: "geopackage", label: "GeoPackage" },
  { indent: 0, arrow: "closed", icon: "spatialite", label: "SpatiaLite" },
  { indent: 0, arrow: "closed", icon: "postgis", label: "PostGIS" },
  { indent: 0, icon: "mssql", label: "MSSQL" },
];

const BrowserRow = ({ e }: { e: TreeEntry }) => (
  <TreeRow $indent={e.indent}>
    <ArrowSlot>{e.arrow && <TreeArrow $open={e.arrow === "open"} />}</ArrowSlot>
    <TreeIcon>{e.icon && treeGlyph[e.icon]}</TreeIcon>
    {e.label}
  </TreeRow>
);

/* ---------- map: traced outline and county lines, block fill generated from noise ---------- */

type P = [number, number];

const pairs = (ox: number, oy: number, v: number[]): P[] => {
  const out: P[] = [];
  for (let i = 0; i < v.length; i += 2) out.push([ox + v[i] / 3, oy + v[i + 1] / 3]);
  return out;
};
const west = (v: number[]) => pairs(430, 600, v);
const east = (v: number[]) => pairs(1000, 430, v);

const outline: P[] = [
  ...west([68, 737, 85, 685, 100, 675, 115, 700, 150, 705, 160, 670, 185, 650, 155, 630, 165, 610, 190, 600, 165, 585, 170, 575, 190, 570, 198, 515, 170, 490, 175, 460, 215, 410, 250, 395, 290, 405, 340, 430, 390, 460, 420, 478, 450, 465, 458, 440, 430, 385, 435, 350, 450, 315, 470, 310, 490, 320, 510, 300, 590, 290, 605, 265, 575, 230, 568, 195, 590, 165, 620, 135, 655, 125, 660, 90, 675, 75, 705, 100, 750, 90, 760, 120, 780, 105, 775, 70, 785, 55, 800, 80, 845, 70, 890, 90, 945, 120, 965, 145, 985, 100, 1015, 85, 1075, 48, 1100, 70, 1125, 95, 1150, 100]),
  [830, 600], [950, 480], [1020, 462],
  ...east([85, 55, 140, 12, 190, 40, 245, 25, 265, 65, 305, 70, 310, 88, 360, 170, 395, 185, 440, 180, 475, 195, 500, 235, 555, 255, 565, 225, 610, 215, 680, 260, 745, 250, 780, 205, 835, 185, 845, 220, 850, 260, 920, 295, 950, 325, 960, 385, 950, 420, 945, 470, 1005, 550, 1030, 610, 1075, 690, 1115, 715, 1140, 745, 1200, 750, 1110, 840, 1060, 885, 1000, 905, 930, 950, 915, 1010, 860, 1020, 870, 1060, 845, 1095, 775, 1110, 765, 1145, 650, 1185, 560, 1225, 300, 1222, 90, 1218, 0, 1210]),
  ...west([1500, 708, 1400, 700, 1250, 690, 1190, 690, 1170, 698, 1160, 690, 672, 690, 670, 677, 595, 670, 603, 735, 595, 755, 425, 745, 200, 742]),
];

const westLines: number[][] = [
  [270, 400, 305, 530, 305, 740], [198, 535, 305, 530, 435, 538], [190, 612, 305, 615], [165, 668, 260, 705, 290, 740],
  [435, 495, 435, 540, 425, 745], [430, 630, 560, 635], [415, 490, 480, 482, 525, 510, 560, 575],
  [490, 320, 545, 405, 545, 450, 535, 470, 530, 515], [545, 450, 590, 430, 620, 460, 665, 540],
  [590, 405, 690, 345, 860, 255], [645, 290, 725, 215, 720, 150, 655, 90], [725, 212, 820, 212, 860, 255], [645, 290, 650, 320, 695, 345],
  [820, 212, 850, 195, 900, 150, 890, 90], [850, 195, 980, 250, 1020, 225, 1075, 180, 1070, 130, 1040, 120, 1030, 95],
  [1075, 175, 1145, 210, 1130, 130], [985, 255, 960, 295, 965, 330, 955, 360, 985, 345, 1010, 390, 1040, 415, 1030, 460, 1040, 480],
  [870, 280, 875, 325, 925, 340, 965, 325], [890, 340, 855, 395, 880, 430, 875, 460, 905, 495, 980, 490, 1125, 520],
  [690, 360, 710, 420, 740, 445, 805, 468, 875, 455], [740, 445, 725, 515, 670, 538, 555, 570], [725, 515, 748, 530, 735, 690],
  [900, 500, 870, 690], [980, 495, 975, 690], [1040, 415, 1080, 365, 1095, 375, 1150, 335, 1205, 370, 1230, 450, 1150, 435, 1125, 520, 1165, 605, 1228, 620, 1225, 690],
  [1145, 590, 1095, 650, 1090, 690], [1130, 260, 1190, 235, 1250, 250, 1340, 260, 1365, 310, 1365, 340, 1340, 365, 1205, 370], [1130, 260, 1150, 335],
  [1325, 145, 1280, 240], [1325, 145, 1390, 130, 1395, 80], [1250, 75, 1325, 145], [1325, 365, 1355, 430, 1355, 495, 1280, 485, 1230, 450],
  [1360, 450, 1500, 430], [1365, 312, 1500, 325], [1340, 495, 1320, 560, 1230, 630], [1320, 560, 1350, 580, 1365, 630, 1400, 655, 1460, 600, 1500, 590],
  [1400, 655, 1400, 700], [1500, 175, 1430, 260, 1425, 310], [1500, 470, 1470, 450, 1480, 560, 1500, 590],
];

const eastLines: number[][] = [
  [430, 270, 450, 190], [430, 270, 470, 333, 560, 305, 555, 255], [560, 305, 585, 350, 640, 365, 680, 260], [640, 365, 670, 395, 710, 350, 735, 310, 780, 205],
  [735, 310, 815, 350, 880, 370, 920, 310], [880, 370, 880, 430, 945, 415], [710, 350, 675, 395, 705, 450, 735, 425, 820, 460, 840, 450, 875, 430],
  [705, 450, 700, 520, 790, 545, 835, 490, 820, 460], [395, 340, 450, 350, 490, 410, 435, 460, 400, 500, 420, 490, 515, 545],
  [490, 410, 565, 460, 600, 500, 640, 530, 700, 500], [515, 545, 525, 590, 570, 630, 545, 680, 425, 630, 435, 590, 515, 545], [640, 530, 620, 610, 570, 630],
  [620, 620, 710, 680, 745, 620, 815, 600], [715, 680, 640, 700, 610, 725, 540, 685, 490, 730, 470, 770, 380, 755, 385, 700, 395, 640],
  [815, 545, 810, 630, 835, 680, 920, 660, 960, 690, 1040, 670], [815, 545, 945, 600, 930, 630, 960, 680], [945, 600, 965, 560, 1005, 550],
  [835, 680, 855, 780, 830, 780, 640, 700], [600, 790, 610, 725], [470, 770, 510, 860, 380, 870, 355, 790, 380, 755],
  [510, 860, 610, 905, 600, 790, 550, 800, 480, 785], [960, 690, 965, 780, 920, 880, 850, 790, 770, 800, 765, 890, 820, 935, 915, 885],
  [765, 890, 680, 840, 610, 870, 625, 920, 660, 880, 690, 900, 750, 990, 750, 1020, 770, 1020, 800, 920], [625, 920, 610, 960, 620, 1060, 640, 1075, 750, 1015],
  [380, 870, 450, 910, 330, 950, 325, 990, 310, 1060, 395, 1040, 470, 1005, 480, 995, 450, 960, 450, 910], [480, 995, 540, 1030, 620, 1050],
  [325, 955, 225, 865, 90, 985, 90, 1030, 190, 1035, 215, 1105, 250, 1060, 310, 1060], [225, 865, 245, 880, 260, 800, 295, 800, 355, 790],
  [260, 800, 110, 770, 105, 830, 130, 860, 30, 905, 35, 945], [90, 985, 35, 945, 0, 1000], [110, 770, 40, 780, 40, 730, 50, 590],
  [400, 1060, 415, 1110, 470, 1170, 530, 1130, 620, 1050], [320, 1060, 305, 1110, 320, 1170, 350, 1222], [470, 1170, 470, 1222], [630, 1060, 640, 1180], [215, 1105, 150, 1220],
  [130, 730, 190, 740, 170, 680, 250, 660, 295, 780],
];

const midLines: P[][] = [
  [[905, 650], [935, 690], [930, 790]],
  [[930, 705], [1013, 665], [1000, 640]],
  [[930, 790], [1012, 713], [1032, 697], [1083, 703]],
  [[1013, 667], [1012, 713]],
  [[968, 653], [1005, 640], [1060, 620]],
];

const makeRnd = (start: number) => {
  let seed = start;
  return () => {
    seed = (seed * 16807) % 2147483647;
    return seed / 2147483647;
  };
};

// break long segments into short jittered steps so borders read as traced, not ruled
const roughen = (pts: P[], amp: number, rnd: () => number, close = false, step = 6): P[] => {
  const out: P[] = [];
  const count = close ? pts.length : pts.length - 1;
  for (let i = 0; i < count; i++) {
    const a = pts[i];
    const b = pts[(i + 1) % pts.length];
    const flatBottom = a[1] > 825 && b[1] > 825;
    const n = flatBottom ? 1 : Math.max(1, Math.round(Math.hypot(b[0] - a[0], b[1] - a[1]) / step));
    for (let j = 0; j < n; j++) {
      const t = j / n;
      const k = j === 0 ? 0 : amp;
      out.push([a[0] + (b[0] - a[0]) * t + (rnd() - 0.5) * 2 * k, a[1] + (b[1] - a[1]) * t + (rnd() - 0.5) * 2 * k]);
    }
  }
  if (!close) out.push(pts[pts.length - 1]);
  return out;
};

const linePath = (pts: P[]) => pts.map((p, i) => `${i ? "L" : "M"}${p[0].toFixed(1)} ${p[1].toFixed(1)}`).join("");
const polyPath = (pts: P[]) => linePath(pts) + "Z";

const buildBlocks = () => {
  const rnd = makeRnd(20231);
  const CELL = 7;
  const cols = 142;
  const rows = 66;
  const x0 = 428;
  const y0 = 428;
  const noiseField = (step: number) => {
    const w = Math.ceil(cols / step) + 3;
    const h = Math.ceil(rows / step) + 3;
    const g = Array.from({ length: w * h }, rnd);
    return (cx: number, cy: number) => {
      const fx = cx / step;
      const fy = cy / step;
      const ix = Math.floor(fx);
      const iy = Math.floor(fy);
      const tx = fx - ix;
      const ty = fy - iy;
      const at = (a: number, b: number) => g[b * w + a];
      return (at(ix, iy) * (1 - tx) + at(ix + 1, iy) * tx) * (1 - ty) + (at(ix, iy + 1) * (1 - tx) + at(ix + 1, iy + 1) * tx) * ty;
    };
  };
  const coarse = noiseField(5);
  const fine = noiseField(1.7);
  const spots = noiseField(3);
  const pts: P[][] = [];
  for (let r = 0; r <= rows; r++) {
    const line: P[] = [];
    for (let c = 0; c <= cols; c++) {
      line.push([x0 + c * CELL + (rnd() - 0.5) * 5, y0 + r * CELL + (rnd() - 0.5) * 5]);
    }
    pts.push(line);
  }
  let light = "";
  let mid = "";
  for (let r = 0; r < rows; r++) {
    for (let c = 0; c < cols; c++) {
      const n = coarse(c, r) * 0.55 + fine(c, r) * 0.45;
      const s = spots(c, r) + (rnd() - 0.5) * 0.05;
      const cell = polyPath([pts[r][c], pts[r][c + 1], pts[r + 1][c + 1], pts[r + 1][c]]);
      if (s > 0.8 && n > 0.42) mid += cell;
      else if (n > 0.53) light += cell;
    }
  }
  return { light, mid };
};

const blocks = buildBlocks();
const rough = makeRnd(4242);
const outlinePath = polyPath(roughen(outline, 0.7, rough, true));
const countyPath = [...westLines.map(west), ...eastLines.map(east), ...midLines].map((l) => linePath(roughen(l, 0.9, rough))).join("");
const patchPath = (p: P[]) => polyPath(roughen(p, 1.8, rough, true, 5));

const navyPatches = [
  west([560, 575, 615, 560, 625, 610, 640, 668, 595, 668]),
  west([1285, 400, 1300, 410, 1350, 412, 1362, 425, 1360, 465, 1335, 465, 1310, 435, 1285, 425]),
  west([672, 192, 695, 190, 695, 200, 672, 198]),
];
const bluePatches = [
  west([70, 737, 90, 680, 105, 680, 115, 700, 150, 710, 185, 738]),
  west([160, 630, 185, 605, 230, 620, 190, 665, 170, 660]),
  west([1395, 75, 1430, 80, 1455, 110, 1475, 140, 1400, 145, 1415, 110]),
  east([620, 465, 650, 420, 660, 450, 645, 480]),
  east([700, 590, 730, 590, 748, 615, 725, 635]),
  east([395, 680, 420, 660, 435, 705, 395, 710]),
  east([900, 700, 920, 705, 910, 720]),
  east([850, 870, 865, 855, 868, 878]),
  west([790, 575, 825, 572, 830, 610, 810, 618]),
  west([1195, 530, 1265, 505, 1230, 525, 1210, 550]),
];
const midPatches = [
  west([440, 340, 470, 340, 495, 410, 465, 440, 430, 385]),
  west([215, 410, 270, 400, 265, 440, 235, 455]),
  east([90, 1215, 115, 1150, 150, 1100, 210, 1105, 145, 1215]),
  east([600, 770, 650, 735, 725, 810, 690, 840, 620, 830]),
  west([1250, 200, 1290, 185, 1285, 235, 1260, 235]),
  west([1270, 690, 1340, 665, 1385, 640, 1400, 695]),
  west([905, 470, 945, 445, 950, 490, 905, 495]),
  west([1040, 350, 1075, 305, 1110, 350]),
];

const KentuckyMap = () => (
  <MapSvg width="1023" height="938" viewBox="409 171 1023 938">
    <defs>
      <clipPath id="state"><path d={outlinePath} /></clipPath>
    </defs>
    <path d={outlinePath} fill="#f7fbff" />
    <g clipPath="url(#state)">
      <path d={blocks.light} fill="#c6dbef" />
      <path d={blocks.mid} fill="#6baed6" />
      {midPatches.map((p, i) => <path key={i} d={patchPath(p)} fill="#6baed6" />)}
      {bluePatches.map((p, i) => <path key={i} d={patchPath(p)} fill="#2171b5" />)}
      {navyPatches.map((p, i) => <path key={i} d={polyPath(p)} fill="#08306b" />)}
      <path d={countyPath} fill="none" stroke="#3a3a3a" strokeWidth="0.9" />
    </g>
    <path d={outlinePath} fill="none" stroke="#111" strokeWidth="1.800" strokeLinejoin="round" />
    <ellipse cx="440" cy="839" rx="6.500" ry="7.500" fill="#2171b5" stroke="#111" strokeWidth="1.800" />
  </MapSvg>
);

/* ---------- form pieces ---------- */

const Spin = () => (
  <SpinPair><TinyUp /><TinyDrop /></SpinPair>
);

const menuChevron = (
  <Chevron width="7" height="12" viewBox="0 0 7 12">
    <path d="M1 1l5 5-5 5" fill="none" stroke="#eee" strokeWidth="1.800" />
  </Chevron>
);

const Mi = ({ k }: { k: string }) => (
  <MenuIcon><Ico k={k} size={16} /></MenuIcon>
);

const App = () => {
  const menuTitles = ["Edit", "View", "Layer", "Settings", "Plugins", "Vector", "Raster", "Database", "Web", "Mesh", "MMQGIS", "Processing", "Window", "Help"];

  return (
    <Page>
      <GlobalStyle />

      <MenuBar>
        <MenuTitle $bold>QGIS-LTR</MenuTitle>
        <MenuTitle $active><b>Project</b></MenuTitle>
        {menuTitles.map((m) => <MenuTitle key={m}>{m}</MenuTitle>)}
      </MenuBar>

      <TitleBar>
        <Lights>
          <Light $c="#ee5f57" />
          <Light $c="#f5ae3a" />
          <Light $c="#3fc14a" />
        </Lights>
        <WindowTitle>*blocks — QGIS</WindowTitle>
      </TitleBar>

      <Toolbar items={row1} h={36} />
      <Toolbar items={row2} h={42} />
      <Toolbar items={row3} h={39} pb={5} />

      <Workspace>
        <LeftDock>
          <DockHeader $h={19}>
            Browser
            <DockFloat />
          </DockHeader>
          <DockTools $h={29}>
            <ToolBtn><Ico k="browserNew" size={20} /></ToolBtn>
            <ToolBtn><Ico k="refresh" size={20} /></ToolBtn>
            <ToolBtn><Funnel size={18} /></ToolBtn>
          </DockTools>
          <BrowserWell>
            <TreeList>
              {treeTop.map((e, i) => <BrowserRow key={i} e={e} />)}
              <TreeGap $h={54} />
              <TreeGap $h={27} $green />
              <TreeGap $h={9} />
              {treeBottom.map((e, i) => <BrowserRow key={i} e={e} />)}
            </TreeList>
            <ScrollTrack><ScrollThumb /></ScrollTrack>
          </BrowserWell>

          <DockHeader $h={28}>
            Layers
            <DockFloat />
          </DockHeader>
          <DockTools $h={28}>
            <ToolBtn $on><Ico k="brush" size={20} /></ToolBtn>
            <ToolBtn><Ico k="layerIndicator" size={18} /></ToolBtn>
            <ToolBtn><Ico k="eyeDrop" size={18} /></ToolBtn>
            <ToolBtn><Funnel /></ToolBtn>
            <ToolBtn><Ico k="epsilon" size={18} /></ToolBtn>
            <TinyDrop />
            <ToolBtn><Ico k="expandAll" size={18} /></ToolBtn>
            <ToolBtn><Ico k="collapseAll" size={18} /></ToolBtn>
            <ToolBtn><Ico k="removeLayer" size={18} /></ToolBtn>
          </DockTools>
          <LayerWell>
            <LayerRow $active>
              <ArrowSlot />
              <LayerBody>
                <EyeSlot><Eye /></EyeSlot>
                <SymbolSlot><SymbolDim /></SymbolSlot>
                <LayerName $under>us_states</LayerName>
                <FilterChip><Funnel c="#3e3a32" top="#3e3a32" /></FilterChip>
              </LayerBody>
            </LayerRow>
            <LayerRow>
              <ArrowSlot />
              <LayerBody>
                <EyeSlot><Eye /></EyeSlot>
                <SymbolSlot />
                <LayerName>ky_counties</LayerName>
              </LayerBody>
            </LayerRow>
            <LayerRow>
              <ArrowSlot><TreeArrow $open /></ArrowSlot>
              <LayerBody>
                <EyeSlot><Eye /></EyeSlot>
                <SymbolSlot>
                  <svg width="16" height="12" viewBox="0 0 16 12"><path d="M1 2c2-2 4 0 7 0s5-2 7 0 1 7-1 8-3-3-6-3-5 4-6 3-3-6-1-8z" fill="#e8e8e8" /></svg>
                </SymbolSlot>
                <LayerName>ky_census_blocks</LayerName>
              </LayerBody>
            </LayerRow>
            {[
              ["#f7fbff", "0 – 20%"],
              ["#c6dbef", "20 – 30%"],
              ["#6baed6", "30 – 43%"],
              ["#2171b5", "43 – 69%"],
              ["#08306b", "69 – 100%"],
            ].map(([c, t]) => (
              <LegendRow key={t}>
                <LegendBody>
                  <EyeSlot><Eye /></EyeSlot>
                  <Swatch $c={c} />
                  {t}
                </LegendBody>
              </LegendRow>
            ))}
          </LayerWell>
        </LeftDock>

        <Canvas>
          <KentuckyMap />
        </Canvas>

        <RightDock>
          <RightTitle>Layer Styling</RightTitle>
          <Strip>
            <svg width="16" height="12" viewBox="0 0 16 12"><path d="M1 2c2-2 4 0 7 0s5-2 7 0 1 7-1 8-3-3-6-3-5 4-6 3-3-6-1-8z" fill="#e0e0e0" /></svg>
            us_states
          </Strip>
          <RightBody>
            <TabColumn>
              <SideTab $on><Ico k="brush" size={24} /></SideTab>
              <SideTab><svg width="24" height="18" viewBox="0 0 28 20"><path d="M1 10l5-6h21v12H6z" fill="#e9c53f" /><text x="7" y="14" fontSize="10" fontFamily="Liberation Sans" fontWeight="700" fill="#222">abc</text></svg></SideTab>
              <SideTab><svg width="24" height="18" viewBox="0 0 28 20"><rect x="1" y="3" width="26" height="14" rx="7" fill="#e6e6e6" /><text x="4.500" y="14.500" fontSize="11" fontFamily="Liberation Sans" fontWeight="700" fill="#223">abc</text></svg></SideTab>
              <SideTab><svg width="22" height="24" viewBox="0 0 22 24"><path d="M11 1l10 6-10 6L1 7z" fill="#d9544c" /><path d="M1 7l10 6v10L1 17z" fill="#8fbf4f" /><path d="M21 7l-10 6v10l10-6z" fill="#e9d13a" /></svg></SideTab>
              <SideTab><svg width="24" height="24" viewBox="0 0 24 24"><rect x="7" y="1" width="10" height="7" fill="#d9544c" /><path d="M12 8v6M4 18v-4h16v4M12 14v6" stroke="#e8b060" strokeWidth="1.600" fill="none" /><rect x="1" y="17" width="9" height="7" fill="#e9c53f" /><rect x="14" y="17" width="9" height="7" fill="#8fbbe8" /></svg></SideTab>
              <SideTab><svg width="22" height="22" viewBox="0 0 22 22"><path d="M9 1L2 6l7 5V8c3 0 4 1 5 3 0-5-2-7-5-7z" fill="#6fb06f" /><path d="M13 9l7 5-7 5v-3c-3 0-4-1-5-3 0 5 2 7 5 7z" fill="#e28a3a" /></svg></SideTab>
            </TabColumn>

            <SymbolPage>
              <Strip>
                <svg width="18" height="14" viewBox="0 0 18 14"><path d="M3 2h11M5 7h10M3 12h11" stroke="#1f9d5a" strokeWidth="2.400" /></svg>
                Single Symbol
              </Strip>
              <SymbolTop>
                <PreviewCell><PreviewBox /></PreviewCell>
                <SymbolList>
                  <ListHead><TreeArrow $open /><b>Fill</b></ListHead>
                  <ListItem $on><i />Simple Fill</ListItem>
                </SymbolList>
                <SideButtons>
                  <SquareBtn>
                    <svg width="16" height="16" viewBox="0 0 16 16"><path d="M5.500 1h5v4.500H15v5h-4.500V15h-5v-4.500H1v-5h4.500z" fill="#1c1c1c" stroke="#7ccd7c" strokeWidth="1.400" /></svg>
                  </SquareBtn>
                  <SquareBtn>
                    <svg width="16" height="8" viewBox="0 0 16 8"><rect x="1" y="1" width="14" height="5" fill="#5a5a5a" stroke="#6e6e6e" /></svg>
                  </SquareBtn>
                  <SquareBtn>
                    <svg width="16" height="16" viewBox="0 0 16 16"><rect x="1" y="3" width="11" height="11" fill="#888" /><rect x="4" y="1" width="11" height="11" fill="#eee" /><rect x="9" y="9" width="6" height="6" fill="#e9c53f" /></svg>
                  </SquareBtn>
                </SideButtons>
              </SymbolTop>

              <TypeRow>
                <span>Symbol layer type</span>
                <Strip>Simple Fill</Strip>
              </TypeRow>

              <FieldStack>
                <FieldRow $h={26}>
                  <FieldLabel>Fill color</FieldLabel>
                  <Combo $h={26}>
                    <ColorFill $c="#e25a8c" />
                    <TinyDrop />
                  </Combo>
                  <DefinedSlot><DataDefined /></DefinedSlot>
                </FieldRow>
                <FieldRow $h={24}>
                  <FieldLabel>Fill style</FieldLabel>
                  <Combo $h={23} $pad={40}>
                    No Brush
                    <TinyDrop />
                  </Combo>
                  <DefinedSlot><DataDefined /></DefinedSlot>
                </FieldRow>
                <FieldRow $h={26}>
                  <FieldLabel>Stroke color</FieldLabel>
                  <Combo $h={26}>
                    <ColorFill $c="#222" />
                    <TinyDrop />
                  </Combo>
                  <DefinedSlot><DataDefined /></DefinedSlot>
                </FieldRow>
                <FieldRow $h={24}>
                  <FieldLabel>Stroke width</FieldLabel>
                  <NumberInput $focus>
                    <Selected>0.660000</Selected>
                    <ClearMark width="14" height="10" viewBox="0 0 14 10"><path d="M0 5l4-5h10v10H4z" fill="#bdbdbd" /><path d="M6 3l4 4M10 3L6 7" stroke="#333" /></ClearMark>
                    <Spin />
                  </NumberInput>
                  <Unit>
                    <Combo $w={131}>
                      Millimeters
                      <TinyDrop />
                    </Combo>
                  </Unit>
                  <DefinedSlot><DataDefined /></DefinedSlot>
                </FieldRow>
                <FieldRow $h={24}>
                  <FieldLabel>Stroke style</FieldLabel>
                  <Combo>
                    <LineSample />
                    Solid Line
                    <TinyDrop $c="#999" />
                  </Combo>
                  <DefinedSlot><DataDefined /></DefinedSlot>
                </FieldRow>
                <FieldRow $h={24}>
                  <FieldLabel>Join style</FieldLabel>
                  <Combo>
                    <JoinMark width="15" height="16" viewBox="0 0 15 16"><path d="M0 5l5-4h9v14H9V6H0z" fill="#6b9cd0" /><path d="M2 4h8M10 4v9" stroke="#e9d13a" strokeDasharray="2 1.500" /></JoinMark>
                    Bevel
                    <TinyDrop />
                  </Combo>
                  <DefinedSlot><DataDefined /></DefinedSlot>
                </FieldRow>
                <FieldRow $h={52}>
                  <FieldLabel>
                    Offset
                    <AxisLabels><span>x</span><span>y</span></AxisLabels>
                  </FieldLabel>
                  <OffsetStack>
                    <NumberInput>0.000000<Spin /></NumberInput>
                    <NumberInput>0.000000<Spin /></NumberInput>
                  </OffsetStack>
                  <Unit>
                    <Combo $w={131}>
                      Millimeters
                      <TinyDrop />
                    </Combo>
                  </Unit>
                  <DefinedSlot><DataDefined /></DefinedSlot>
                </FieldRow>
              </FieldStack>

              <EnableRow>
                <Check $on />
                Enable symbol layer
                <InlineDefined><DataDefined /></InlineDefined>
                <Check />
                Draw effects
                <StarBtn>
                  <svg width="16" height="16" viewBox="0 0 16 16"><path d="M8 0l2.300 5.500 5.700.5-4.300 3.700L13 16l-5-3.200L3 16l1.300-6.300L0 6l5.700-.5z" fill="#5e574a" /></svg>
                </StarBtn>
              </EnableRow>

              <RenderingRow>
                <HollowArrow />
                Layer Rendering
              </RenderingRow>

              <ActionRow>
                <ActionBtn>
                  <svg width="14" height="16" viewBox="0 0 14 16"><path d="M7 1L1 6l6 5V8c3 0 4 2 4 7 3-6 2-11-4-11z" fill="#e28a3a" /></svg>
                </ActionBtn>
                <ActionBtn>
                  <svg width="14" height="16" viewBox="0 0 14 16"><path d="M7 1l6 5-6 5V8c-3 0-4 2-4 7C0 9 1 4 7 4z" fill="#6fb06f" /></svg>
                </ActionBtn>
                <LiveGroup>
                  <Check $on />
                  Live update
                  <ApplyBtn>A</ApplyBtn>
                </LiveGroup>
              </ActionRow>
            </SymbolPage>
          </RightBody>
          <TabBar>
            <DockTab $on $w={107}>Layer Styling</DockTab>
            <DockTab $w={146}>Processing Toolbox</DockTab>
          </TabBar>
        </RightDock>
      </Workspace>

      <StatusBar>
        <Locator>
          <svg width="14" height="14" viewBox="0 0 14 14"><circle cx="6" cy="6" r="4.500" fill="none" stroke="#7a7a7a" strokeWidth="1.500" /><path d="M9.500 9.500l4 4" stroke="#7a7a7a" strokeWidth="1.500" /></svg>
          Type to locate (⌘K)
        </Locator>
        <StatusPush $w={816} />
        <StatusLabel $w={61}>Coordinate</StatusLabel>
        <CoordBox>3934984,4722176</CoordBox>
        <StatusIcon $w={28}>
          <svg width="14" height="20" viewBox="0 0 14 20"><path d="M2 1l3 10M12 1L8 11" stroke="#ddd" strokeWidth="2" /><circle cx="7" cy="14" r="4.500" fill="none" stroke="#eee" strokeWidth="1.600" /></svg>
        </StatusIcon>
        <StatusLabel $w={32} $ml={7}>Scale</StatusLabel>
        <StatusCombo $w={120}>1:1982532<TinyDrop /></StatusCombo>
        <StatusIcon $w={35}>
          <svg width="13" height="20" viewBox="0 0 13 20"><rect x="1" y="8" width="11" height="11" rx="1.500" fill="#7c7c7c" /><path d="M3 8V4a3.500 3.500 0 0 1 7 0v4" fill="none" stroke="#888" strokeWidth="1.600" /></svg>
        </StatusIcon>
        <StatusLabel $w={53}>Magnifier</StatusLabel>
        <StatusCombo $w={88}>100%<Spin /></StatusCombo>
        <StatusLabel $w={53} $ml={13}>Rotation</StatusLabel>
        <StatusCombo $w={90}>0.0 °<Spin /></StatusCombo>
        <RenderCheck />
        <StatusLabel $w={37}>Render</StatusLabel>
        <StatusIcon $w={20} $ml={11}>
          <svg width="15" height="15" viewBox="0 0 15 15"><circle cx="7.500" cy="7.500" r="6.500" fill="#c6c6c6" /><path d="M1 7.500h13M7.500 1v13M3 3c3 2 6 2 9 0M3 12c3-2 6-2 9 0" stroke="#444" fill="none" strokeWidth=".8" /></svg>
        </StatusIcon>
        <StatusLabel $w={70}>EPSG:3089</StatusLabel>
      </StatusBar>

      <ProjectMenu>
        <MenuRow><Mi k="new" />New<Shortcut>⌘N</Shortcut></MenuRow>
        <MenuRow>New from Template{menuChevron}</MenuRow>
        <MenuSep />
        <MenuRow><Mi k="open" />Open...<Shortcut>⌘O</Shortcut></MenuRow>
        <MenuRow>Open From{menuChevron}</MenuRow>
        <MenuRow>Open Recent{menuChevron}</MenuRow>
        <MenuSep />
        <MenuRow>Close</MenuRow>
        <MenuSep />
        <MenuRow><Mi k="save" />Save<Shortcut>⌘S</Shortcut></MenuRow>
        <MenuRow><Mi k="mSaveAs" />Save As...<Shortcut>⇧⌘S</Shortcut></MenuRow>
        <MenuRow>Save To{menuChevron}</MenuRow>
        <MenuRow>Revert...</MenuRow>
        <MenuSep />
        <MenuRow><Mi k="mProps" />Properties...<Shortcut>⇧⌘P</Shortcut></MenuRow>
        <MenuRow>Snapping Options...</MenuRow>
        <MenuRow>Import/Export{menuChevron}</MenuRow>
        <MenuSep />
        <MenuRow $on><Mi k="mLayout" />New Print Layout...<Shortcut $on>⌘P</Shortcut></MenuRow>
        <MenuRow><Mi k="mReport" />New Report...</MenuRow>
        <MenuRow><Mi k="mManager" />Layout Manager...</MenuRow>
        <MenuRow>Layouts{menuChevron}</MenuRow>
      </ProjectMenu>

      <ArrowOverlay width="1910" height="1138" viewBox="0 0 1910 1138">
        <path d="M324 389L770 537" stroke="#f4e842" strokeWidth="4" />
        <path d="M783 542L761 547L774 528z" fill="#f4e842" />
      </ArrowOverlay>

      <Dialog>
        <DialogBar>
          <DialogLights>
            <Light $c="#ee5f57" />
            <Light $c="#5c5c5c" />
            <Light $c="#3fc14a" />
          </DialogLights>
          <DialogTitle>Create Print Layout</DialogTitle>
        </DialogBar>
        <DialogBody>
          Enter a unique print layout title
          <br />
          (a title will be automatically generated if left empty)
          <TitleInput>My demographic analysis</TitleInput>
        </DialogBody>
        <DialogFooter>
          <DialogBtn $w={35}>Help</DialogBtn>
          <CancelBtn $w={48} $push>Cancel</CancelBtn>
          <DialogBtn $w={27}>OK</DialogBtn>
        </DialogFooter>
        <HighlightBox />
      </Dialog>
    </Page>
  );
};

export default App;
